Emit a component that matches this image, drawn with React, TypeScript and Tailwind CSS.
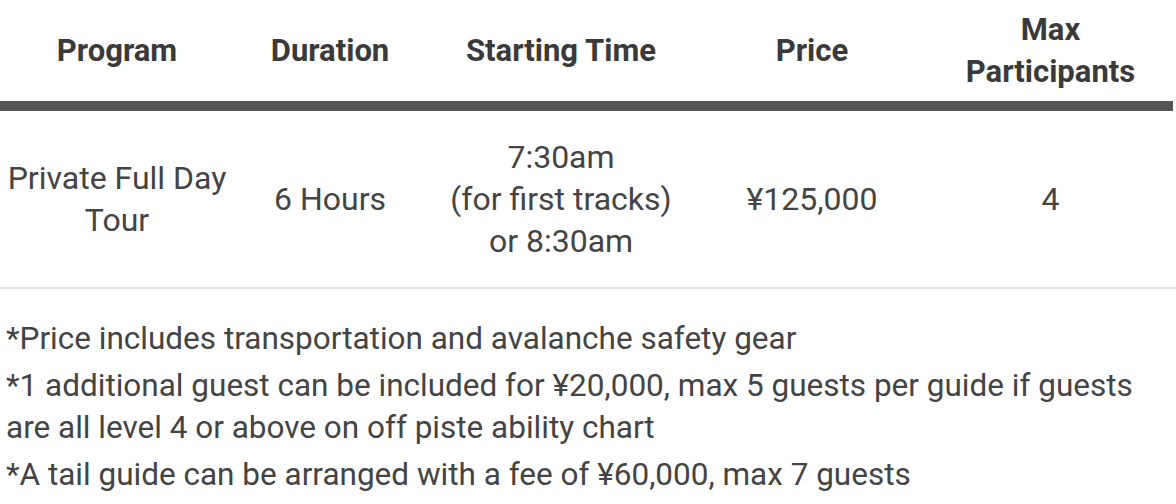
import React from 'react';

const headers = ['Program', 'Duration', 'Starting Time', 'Price', 'Max Participants'];

const notes = [
  '*Price includes transportation and avalanche safety gear',
  '*1 additional guest can be included for ¥20,000, max 5 guests per guide if guests are all level 4 or above on off piste ability chart',
  '*A tail guide can be arranged with a fee of ¥60,000, max 7 guests',
];

export default function App() {
  return (
    <div className="w-[1176px] h-[504px] bg-white text-[#444] font-['Roboto',sans-serif] overflow-hidden">
      <div className="w-[1173px]">
        <div className="grid grid-cols-[234px_192px_270px_232px_245px] border-b-[10px] border-[#555] text-[31px] font-bold leading-[42px] text-[#3a3a3a]">
          {headers.map((h) => (
            <div key={h} className="flex items-center justify-center text-center px-2 py-2 min-h-[101px]">
              {h === 'Max Participants' ? (
                <span>Max<br />Participants</span>
              ) : (
                h
              )}
            </div>
          ))}
        </div>
        <div className="grid grid-cols-[234px_192px_270px_232px_245px] text-[32px] leading-[42px] h-[176px] items-center text-center">
          <div>Private Full Day<br />Tour</div>
          <div>6 Hours</div>
          <div>7:30am<br />(for first tracks)<br />or 8:30am</div>
          <div>¥125,000</div>
          <div>4</div>
        </div>
      </div>
      <div className="h-[2px] bg-[#e3e3e3] w-[1176px]" />
      <div className="pt-[29px] pl-[6px] pr-2 text-[31.5px] leading-[42px]">
        {notes.map((n) => (
          <p key={n} className="mb-[5px]">{n}</p>
        ))}
      </div>
    </div>
  );
}
